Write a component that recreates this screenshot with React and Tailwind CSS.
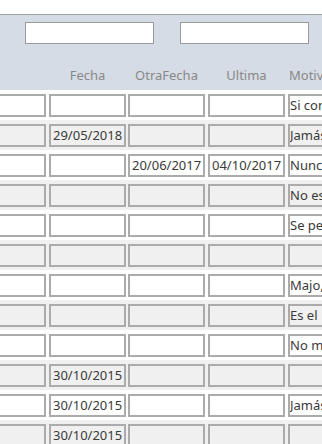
import React from "react";

const cols = [
  { key: "a", left: "ml-[-31px]", width: "w-[77px]" },
  { key: "fecha", left: "ml-[3px]", width: "w-[77px]" },
  { key: "otra", left: "ml-[2px]", width: "w-[77px]" },
  { key: "ultima", left: "ml-[3px]", width: "w-[77px]" },
  { key: "motivo", left: "ml-[3px]", width: "w-[120px]" },
];

const rows = [
  { motivo: "Si considera" },
  { fecha: "29/05/2018", motivo: "Jamás" },
  { otra: "20/06/2017", ultima: "04/10/2017", motivo: "Nunca" },
  { motivo: "No es" },
  { motivo: "Se pe" },
  {},
  { motivo: "Majo, " },
  { motivo: "Es el" },
  { motivo: "No m" },
  { fecha: "30/10/2015" },
  { fecha: "30/10/2015", motivo: "Jamás" },
  { fecha: "30/10/2015" },
];

function Row({ row, odd }) {
  return (
    <div
      className={
        "flex h-[30px] pt-[4px] shrink-0 " + (odd ? "bg-[#f0f0f0]" : "bg-white")
      }
    >
      {cols.map((c) => (
        <div
          key={c.key}
          className={
            c.left +
            " " +
            c.width +
            " h-[23px] shrink-0 border-2 border-[#ababab] flex items-center overflow-hidden whitespace-nowrap text-[13px] text-[#3a3a3a] leading-none " +
            (c.key === "motivo" ? "pl-0" : "pl-[2px]") +
            (odd ? " bg-[#f0f0f0]" : " bg-white")
          }
        >
          {row[c.key] || ""}
        </div>
      ))}
    </div>
  );
}

export default function App() {
  return (
    <div
      className="w-[322px] h-[444px] overflow-hidden bg-white flex flex-col"
      style={{ fontFamily: '"Noto Sans", "Open Sans", sans-serif' }}
    >
      <div className="h-[14px] shrink-0 bg-white" />
      <div className="h-[76px] shrink-0 bg-[#d6dce5] border-t border-[#9ea2a8] flex flex-col">
        <div className="flex mt-[7px]">
          <div className="ml-[25px] w-[129px] h-[22px] shrink-0 bg-white border border-[#9a9a9a]" />
          <div className="ml-[26px] w-[129px] h-[22px] shrink-0 bg-white border border-[#9a9a9a]" />
        </div>
        <div className="flex mt-[25px] text-[13px] text-[#888888] leading-none whitespace-nowrap">
          <div className="ml-[49px] w-[77px] shrink-0 text-center">Fecha</div>
          <div className="ml-[2px] w-[77px] shrink-0 text-center">OtraFecha</div>
          <div className="ml-[3px] w-[77px] shrink-0 text-center">Ultima</div>
          <div className="ml-[4px] shrink-0">Motivo</div>
        </div>
      </div>
      {rows.map((r, i) => (
        <Row key={i} row={r} odd={i % 2 === 1} />
      ))}
    </div>
  );
}
